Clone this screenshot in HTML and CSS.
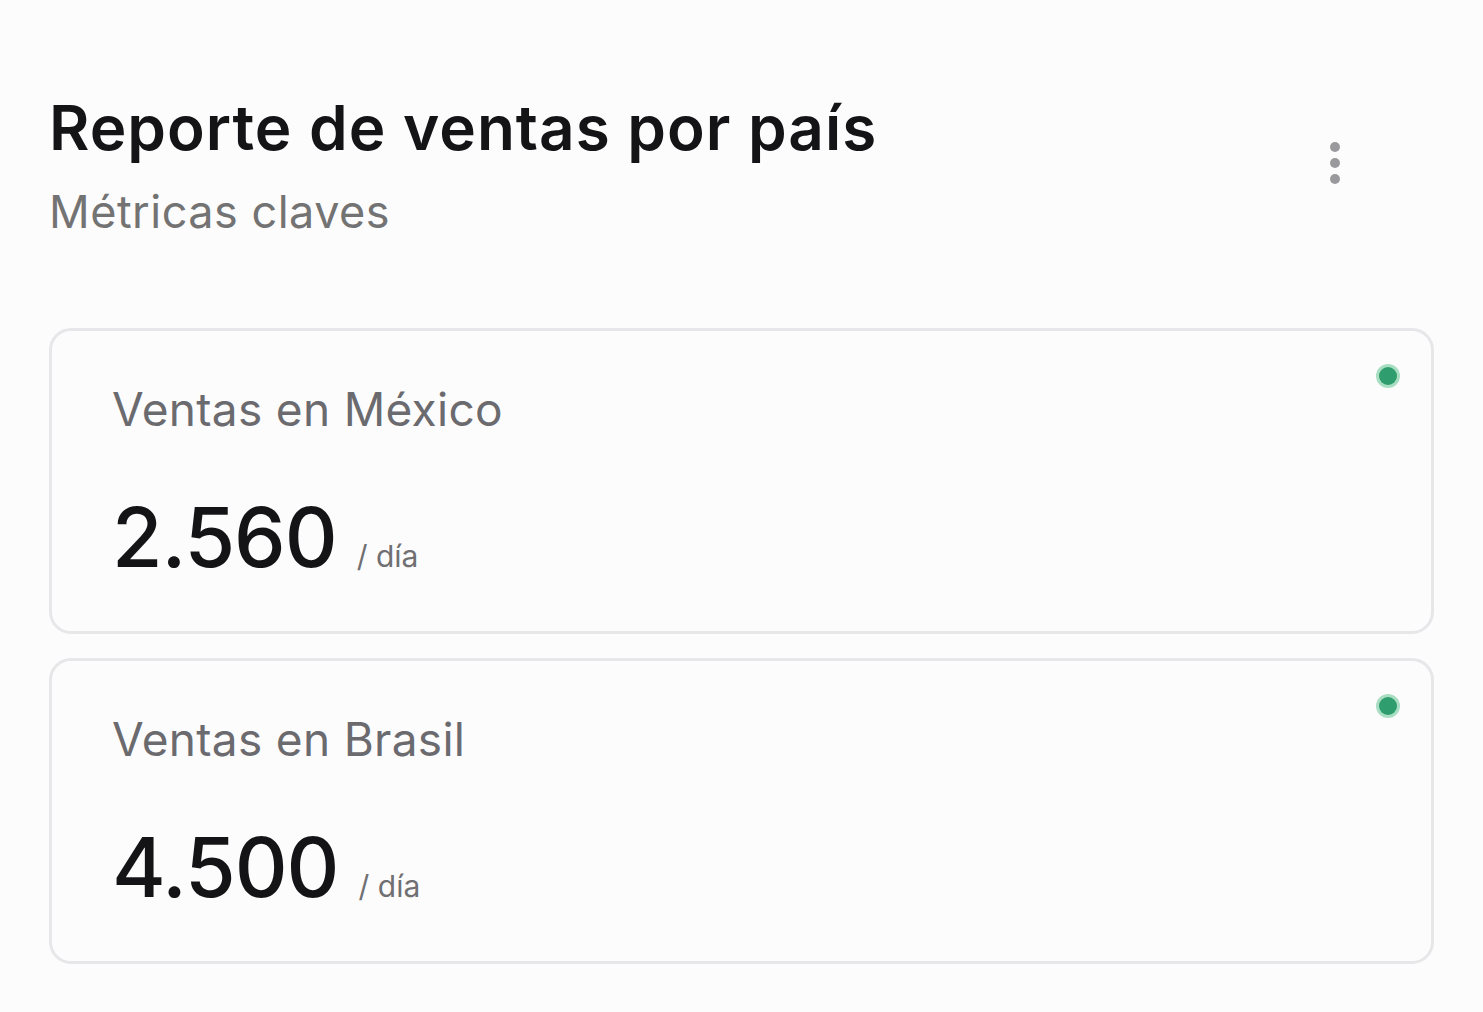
FILE: index.html
```html
<!DOCTYPE html>
<html lang="es">
<head>
    <meta charset="UTF-8">
    <meta name="viewport" content="width=device-width, initial-scale=1.0">
    <title>Reporte de ventas por país</title>
    <link rel="stylesheet" href="styles.css">
</head>
<body>
    <div class="report">
        <header class="report-header">
            <div class="titles">
                <h1>Reporte de ventas por país</h1>
                <p class="subtitle">Métricas claves</p>
            </div>
            <button class="menu-btn" aria-label="Más opciones">
                <span></span><span></span><span></span>
            </button>
        </header>

        <div class="cards">
            <div class="metric-card">
                <span class="status-dot"></span>
                <div class="metric-label">Ventas en México</div>
                <div class="metric-value">
                    <span class="number">2.560</span>
                    <span class="unit">/ día</span>
                </div>
            </div>
            <div class="metric-card">
                <span class="status-dot"></span>
                <div class="metric-label">Ventas en Brasil</div>
                <div class="metric-value">
                    <span class="number">4.500</span>
                    <span class="unit">/ día</span>
                </div>
            </div>
        </div>
    </div>
</body>
</html>
```

FILE: styles.css
```css
body {
    font-family: Inter, 'Noto Sans', sans-serif;
    margin: 0;
    padding: 0;
    background-color: #fdfcfd;
    color: #141417;
}

.report {
    padding: 90px 49px 0 49px;
}

.report-header {
    display: flex;
    justify-content: space-between;
    align-items: flex-start;
    padding-right: 94px;
}

.report-header h1 {
    margin: 0;
    font-size: 62px;
    font-weight: 600;
    letter-spacing: 1px;
    line-height: 76px;
}

.subtitle {
    margin: 18px 0 0 0;
    font-size: 45px;
    font-weight: 400;
    color: #737373;
    letter-spacing: 0.5px;
    line-height: 56px;
}

.menu-btn {
    margin-top: 52px;
    background: none;
    border: none;
    padding: 0;
    display: flex;
    flex-direction: column;
    gap: 6px;
    cursor: pointer;
}

.menu-btn span {
    width: 10px;
    height: 10px;
    border-radius: 50%;
    background-color: #9a9a9c;
}

.cards {
    margin-top: 88px;
    display: flex;
    flex-direction: column;
    gap: 24px;
}

.metric-card {
    position: relative;
    border: 3px solid #e7e6e8;
    border-radius: 22px;
    padding: 0 62px 0 60px;
    box-sizing: border-box;
    height: 306px;
}

.status-dot {
    position: absolute;
    top: 36px;
    right: 34px;
    width: 18px;
    height: 18px;
    border-radius: 50%;
    background-color: #2f9d6d;
    box-shadow: 0 0 0 3px #a9dec3;
}

.metric-label {
    margin-top: 50px;
    font-size: 46px;
    color: #6b6b6f;
    letter-spacing: 0.3px;
    line-height: 56px;
}

.metric-value {
    margin-top: 56px;
    display: flex;
    align-items: baseline;
    gap: 20px;
}

.number {
    font-size: 82px;
    font-weight: 500;
    letter-spacing: -1px;
    line-height: 90px;
}

.unit {
    font-size: 30px;
    color: #707073;
}
```
